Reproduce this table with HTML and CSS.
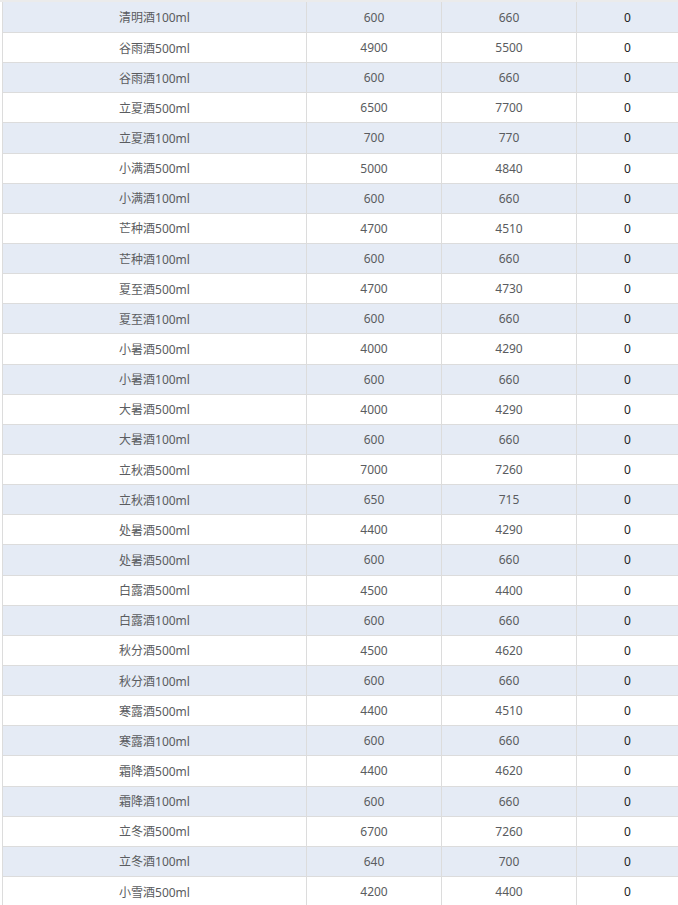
FILE: index.html
```html
<!DOCTYPE html>
<html lang="zh-CN">
<head>
<meta charset="utf-8">
<title>酒品价格表</title>
<link rel="stylesheet" href="styles.css">
</head>
<body>
<div class="topbar"></div>
<div class="table">
  <div class="row stripe"><div class="cell name">清明酒100ml</div><div class="cell">600</div><div class="cell">660</div><div class="cell zero">0</div></div>
  <div class="row"><div class="cell name">谷雨酒500ml</div><div class="cell">4900</div><div class="cell">5500</div><div class="cell zero">0</div></div>
  <div class="row stripe"><div class="cell name">谷雨酒100ml</div><div class="cell">600</div><div class="cell">660</div><div class="cell zero">0</div></div>
  <div class="row"><div class="cell name">立夏酒500ml</div><div class="cell">6500</div><div class="cell">7700</div><div class="cell zero">0</div></div>
  <div class="row stripe"><div class="cell name">立夏酒100ml</div><div class="cell">700</div><div class="cell">770</div><div class="cell zero">0</div></div>
  <div class="row"><div class="cell name">小满酒500ml</div><div class="cell">5000</div><div class="cell">4840</div><div class="cell zero">0</div></div>
  <div class="row stripe"><div class="cell name">小满酒100ml</div><div class="cell">600</div><div class="cell">660</div><div class="cell zero">0</div></div>
  <div class="row"><div class="cell name">芒种酒500ml</div><div class="cell">4700</div><div class="cell">4510</div><div class="cell zero">0</div></div>
  <div class="row stripe"><div class="cell name">芒种酒100ml</div><div class="cell">600</div><div class="cell">660</div><div class="cell zero">0</div></div>
  <div class="row"><div class="cell name">夏至酒500ml</div><div class="cell">4700</div><div class="cell">4730</div><div class="cell zero">0</div></div>
  <div class="row stripe"><div class="cell name">夏至酒100ml</div><div class="cell">600</div><div class="cell">660</div><div class="cell zero">0</div></div>
  <div class="row"><div class="cell name">小暑酒500ml</div><div class="cell">4000</div><div class="cell">4290</div><div class="cell zero">0</div></div>
  <div class="row stripe"><div class="cell name">小暑酒100ml</div><div class="cell">600</div><div class="cell">660</div><div class="cell zero">0</div></div>
  <div class="row"><div class="cell name">大暑酒500ml</div><div class="cell">4000</div><div class="cell">4290</div><div class="cell zero">0</div></div>
  <div class="row stripe"><div class="cell name">大暑酒100ml</div><div class="cell">600</div><div class="cell">660</div><div class="cell zero">0</div></div>
  <div class="row"><div class="cell name">立秋酒500ml</div><div class="cell">7000</div><div class="cell">7260</div><div class="cell zero">0</div></div>
  <div class="row stripe"><div class="cell name">立秋酒100ml</div><div class="cell">650</div><div class="cell">715</div><div class="cell zero">0</div></div>
  <div class="row"><div class="cell name">处暑酒500ml</div><div class="cell">4400</div><div class="cell">4290</div><div class="cell zero">0</div></div>
  <div class="row stripe"><div class="cell name">处暑酒500ml</div><div class="cell">600</div><div class="cell">660</div><div class="cell zero">0</div></div>
  <div class="row"><div class="cell name">白露酒500ml</div><div class="cell">4500</div><div class="cell">4400</div><div class="cell zero">0</div></div>
  <div class="row stripe"><div class="cell name">白露酒100ml</div><div class="cell">600</div><div class="cell">660</div><div class="cell zero">0</div></div>
  <div class="row"><div class="cell name">秋分酒500ml</div><div class="cell">4500</div><div class="cell">4620</div><div class="cell zero">0</div></div>
  <div class="row stripe"><div class="cell name">秋分酒100ml</div><div class="cell">600</div><div class="cell">660</div><div class="cell zero">0</div></div>
  <div class="row"><div class="cell name">寒露酒500ml</div><div class="cell">4400</div><div class="cell">4510</div><div class="cell zero">0</div></div>
  <div class="row stripe"><div class="cell name">寒露酒100ml</div><div class="cell">600</div><div class="cell">660</div><div class="cell zero">0</div></div>
  <div class="row"><div class="cell name">霜降酒500ml</div><div class="cell">4400</div><div class="cell">4620</div><div class="cell zero">0</div></div>
  <div class="row stripe"><div class="cell name">霜降酒100ml</div><div class="cell">600</div><div class="cell">660</div><div class="cell zero">0</div></div>
  <div class="row"><div class="cell name">立冬酒500ml</div><div class="cell">6700</div><div class="cell">7260</div><div class="cell zero">0</div></div>
  <div class="row stripe"><div class="cell name">立冬酒100ml</div><div class="cell">640</div><div class="cell">700</div><div class="cell zero">0</div></div>
  <div class="row"><div class="cell name">小雪酒500ml</div><div class="cell">4200</div><div class="cell">4400</div><div class="cell zero">0</div></div>
</div>
</body>
</html>
```
FILE: styles.css
```css
html, body {
  margin: 0;
  padding: 0;
  background: #ffffff;
  overflow: hidden;
}
body {
  font-family: "Noto Sans", "Noto Sans CJK SC", sans-serif;
  font-size: 12px;
  color: #5a5c60;
}
.topbar {
  height: 2px;
  background: #ebebeb;
}
.table {
  margin-left: 2px;
  border-left: 1px solid #dcdcdc;
  width: 676px;
}
.row {
  display: grid;
  grid-template-columns: 304px 135px 135px 102px;
  height: 30.15px;
  box-sizing: border-box;
  border-bottom: 1px solid #dcdcdc;
  background: #ffffff;
}
.row:first-child {
  height: 31px;
}
.row.stripe {
  background: #e5ebf5;
}
.cell {
  display: flex;
  align-items: center;
  justify-content: center;
  border-right: 1px solid #dcdcdc;
  box-sizing: border-box;
  white-space: nowrap;
}
.cell.zero {
  color: #222222;
}
```
